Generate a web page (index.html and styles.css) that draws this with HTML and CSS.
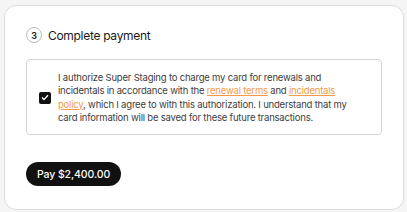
FILE: index.html
```html
<!DOCTYPE html>
<html lang="en">
<head>
  <meta charset="UTF-8">
  <title>Complete payment</title>
  <link rel="stylesheet" href="styles.css">
</head>
<body>
  <div class="card">
    <div class="step-title">
      <span class="step-num">3</span>
      <span>Complete payment</span>
    </div>
    <label class="consent">
      <span class="check">
        <svg width="8" height="7" viewBox="0 0 8 7"><path d="M1 3.6 3 5.6 7 1.2" fill="none" stroke="#fff" stroke-width="1.4"/></svg>
      </span>
      <span class="consent-text">I authorize Super Staging to charge my card for renewals and incidentals in accordance with the <a href="#">renewal terms</a> and <a href="#">incidentals policy</a>, which I agree to with this authorization. I understand that my card information will be saved for these future transactions.</span>
    </label>
    <button class="pay">Pay $2,400.00</button>
  </div>
</body>
</html>
```

FILE: styles.css
```css
body {
  margin: 0;
  padding: 5px 3px 2px 4px;
  background: #f5f5f5;
  font-family: Inter, "Noto Sans", sans-serif;
  color: #1a1a1a;
}
.card {
  background: #fff;
  border: 1px solid #dcdcdc;
  border-radius: 12px;
  padding: 21px 21px 23px;
  height: 205px;
  box-sizing: border-box;
}
.step-title {
  display: flex;
  align-items: center;
  gap: 6px;
  font-size: 12px;
  letter-spacing: -0.3px;
  height: 16px;
}
.step-num {
  width: 14px;
  height: 14px;
  border: 1px solid #bbb;
  border-radius: 50%;
  display: flex;
  align-items: center;
  justify-content: center;
  font-size: 9px;
  font-weight: 600;
  letter-spacing: 0;
}
.consent {
  display: flex;
  align-items: center;
  gap: 7px;
  margin-top: 16px;
  border: 1px solid #d6d6d6;
  border-radius: 4px;
  padding: 11px 20px 10px 12px;
}
.check {
  flex: none;
  width: 12px;
  height: 12px;
  background: #111;
  border-radius: 2px;
  display: flex;
  align-items: center;
  justify-content: center;
}
.consent-text {
  font-size: 9.5px;
  letter-spacing: -0.2px;
  line-height: 13.3px;
  color: #404040;
}
.consent-text a {
  color: #f39a4c;
}
.pay {
  margin-top: 27px;
  height: 24px;
  padding: 0 11px;
  border: none;
  border-radius: 12px;
  background: #111;
  color: #fff;
  font-family: inherit;
  font-size: 10.5px;
  letter-spacing: -0.1px;
  font-weight: 500;
}
```
